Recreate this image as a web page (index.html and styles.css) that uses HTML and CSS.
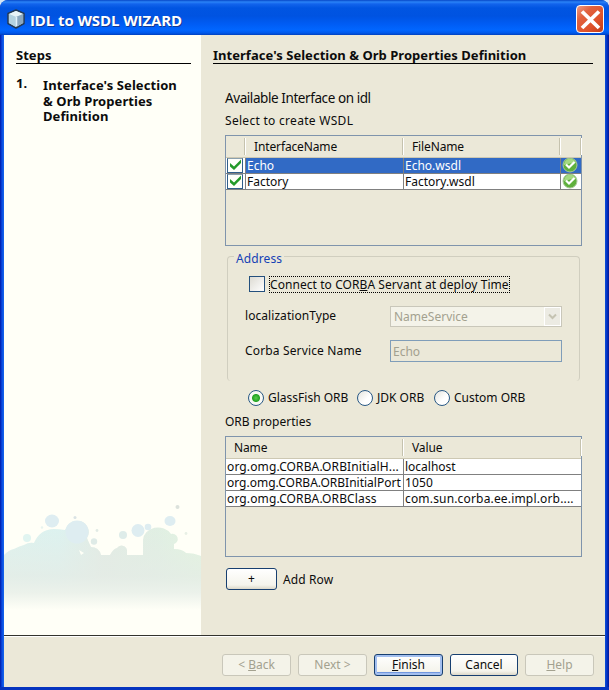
FILE: index.html
```html
<!DOCTYPE html>
<html lang="en">
<head>
<meta charset="utf-8">
<title>IDL to WSDL WIZARD</title>
<link rel="stylesheet" href="styles.css">
</head>
<body>
<div class="window">
  <header class="titlebar">
    <svg class="app-icon" width="20" height="20" viewBox="0 0 20 20">
      <path d="M10 1 18 4.500V14.500L10 19 2 14.500V4.500Z" fill="#c2ddec" stroke="#243a56" stroke-width="1.500" stroke-linejoin="round"/>
      <path d="M10 2 17 5 10 8 3 5Z" fill="#e9f4f8"/>
      <path d="M3 5 10 8V18L3 14Z" fill="#b4d2e0"/>
      <path d="M10 8 17 5V14L10 18Z" fill="#8ba8c0"/>
      <path d="M10.500 8V17" stroke="#e2f1fa" stroke-width="1.500"/>
    </svg>
    <h1 class="title">IDL to WSDL WIZARD</h1>
    <button class="close" aria-label="Close">
      <svg width="23" height="23" viewBox="0 0 23 23"><path d="M3 3.500 20 20M20 3.500 3 20" stroke="#fff" stroke-width="3.800"/></svg>
    </button>
  </header>
  <div class="body">
    <aside class="steps">
      <h2 class="heading">Steps</h2>
      <div class="step"><span class="num">1.</span><span class="step-text">Interface's Selection<br>&amp; Orb Properties<br>Definition</span></div>
      <svg class="art" width="197" height="130" viewBox="4 500 197 130">
        <defs>
          <linearGradient id="hue" x1="4" x2="201" y1="0" y2="0" gradientUnits="userSpaceOnUse">
            <stop offset="0" stop-color="#def3ef"/><stop offset=".28" stop-color="#dcf2f0"/><stop offset=".5" stop-color="#e2ebe4"/><stop offset=".78" stop-color="#e0efe3"/><stop offset="1" stop-color="#e2f5df"/>
          </linearGradient>
          <linearGradient id="fade" x1="0" x2="0" y1="525" y2="610" gradientUnits="userSpaceOnUse">
            <stop offset="0" stop-color="#e5ece5" stop-opacity="0"/><stop offset=".6" stop-color="#e5ece6" stop-opacity=".75"/><stop offset=".8" stop-color="#ecf2eb"/><stop offset="1" stop-color="#fffff7"/>
          </linearGradient>
          <clipPath id="cloud"><path d="M4 555Q9 550 14 549Q20 546 24 545Q29 542 34 543Q40 529 54 529Q59 529 65 530A12 12 0 0 1 77 521A11 11 0 0 1 87 538Q89 543 91 547Q99 547 101 555H110Q113 549 117 548A5.500 5.500 0 0 1 127 550V555H143V540A15 13 0 0 1 171 534A5 5 0 0 1 174 544V549Q182 549 186 553Q194 553 201 556V616H4Z"/></clipPath>
        </defs>
        <g clip-path="url(#cloud)"><path d="M4 515H201V616H4Z" fill="url(#hue)"/><path d="M4 515H201V616H4Z" fill="url(#fade)"/></g>
        <g fill="#deedf1">
          <ellipse cx="52" cy="521" rx="7" ry="6.500"/><circle cx="77" cy="532" r="11.500"/><circle cx="138" cy="530.500" r="6.500"/><circle cx="148" cy="527" r="3.300"/><ellipse cx="170" cy="521" rx="5.500" ry="5"/>
          <circle cx="123" cy="535" r="4" fill="#deece9"/><circle cx="94" cy="541.500" r="3.200" fill="#dfebe7"/><circle cx="27" cy="538" r="4" fill="#e1f5f1"/>
          <circle cx="177.500" cy="507" r="2" fill="#dce2dc"/><circle cx="75" cy="517.500" r="1.500" fill="#dae3e5"/><circle cx="97" cy="530.500" r="1.400" fill="#e2ebe5"/><circle cx="42" cy="527.500" r="1.200" fill="#e8f4ef"/><circle cx="186" cy="533.500" r="1.400" fill="#e8f0e6"/>
        </g>
        <path d="M79 550 84 553 81 555Z" fill="#fffff7"/>
      </svg>
    </aside>
    <main class="panel">
      <h2 class="heading">Interface's Selection &amp; Orb Properties Definition</h2>
      <div class="content">
        <p class="avail">Available Interface on idl</p>
        <p class="select">Select to create WSDL</p>
        <div class="table interfaces">
          <div class="row head"><span></span><span>InterfaceName</span><span>FileName</span><span></span></div>
          <div class="row selected">
            <span class="mark"><svg width="15" height="14" viewBox="0 0 15 14"><path d="M2 5 6 8.500 13 1.500V5L6 12 2 8.500Z" fill="#249a28"/></svg></span>
            <span>Echo</span><span>Echo.wsdl</span>
            <span class="ok"><svg width="16" height="16" viewBox="0 0 16 16"><circle cx="8" cy="8" r="7" fill="#5fb03c" stroke="#a9c79a"/><path d="M2 7Q3 2 8 1.500Q13 2 14 6Q8 6 2 8" fill="#a4d981"/><path d="M4 7.500 7 10.500 12.500 5" fill="none" stroke="#fff" stroke-width="2.200"/></svg></span>
          </div>
          <div class="row">
            <span class="mark"><svg width="15" height="14" viewBox="0 0 15 14"><path d="M2 5 6 8.500 13 1.500V5L6 12 2 8.500Z" fill="#249a28"/></svg></span>
            <span>Factory</span><span>Factory.wsdl</span>
            <span class="ok"><svg width="16" height="16" viewBox="0 0 16 16"><circle cx="8" cy="8" r="7" fill="#5fb03c" stroke="#a9c79a"/><path d="M2 7Q3 2 8 1.500Q13 2 14 6Q8 6 2 8" fill="#a4d981"/><path d="M4 7.500 7 10.500 12.500 5" fill="none" stroke="#fff" stroke-width="2.200"/></svg></span>
          </div>
        </div>
        <section class="group">
          <h3 class="legend">Address</h3>
          <div class="connect"><i class="check"></i><span class="focus">Connect to COR<u>B</u>A Servant at deploy Time</span></div>
          <div class="field type"><label>localizationType</label><div class="combo"><span>NameService</span><i class="drop"><svg width="9" height="7" viewBox="0 0 9 7"><path d="M1 1.500 4.500 5 8 1.500" fill="none" stroke="#c5c3b2" stroke-width="2"/></svg></i></div></div>
          <div class="field name"><label>Corba Service Name</label><div class="input">Echo</div></div>
        </section>
        <div class="radios">
          <i class="radio on"></i><span class="r1">GlassFish ORB</span>
          <i class="radio"></i><span class="r2">JDK ORB</span>
          <i class="radio"></i><span class="r3">Custom ORB</span>
        </div>
        <p class="orb">ORB properties</p>
        <div class="table props">
          <div class="row head"><span>Name</span><span>Value</span></div>
          <div class="row"><span class="wide">org.omg.CORBA.ORBInitialH...</span><span>localhost</span></div>
          <div class="row"><span>org.omg.CORBA.ORBInitialPort</span><span class="wide">1050</span></div>
          <div class="row"><span class="wide">org.omg.CORBA.ORBClass</span><span class="wider">com.sun.corba.ee.impl.orb....</span></div>
        </div>
        <div class="add"><button class="btn plus">+</button><span>Add Row</span></div>
      </div>
    </main>
  </div>
  <footer class="footer">
    <button class="btn off">&lt; <u>B</u>ack</button>
    <button class="btn off">Next &gt;</button>
    <button class="btn default"><u>F</u>inish</button>
    <button class="btn cancel">Cancel</button>
    <button class="btn off"><u>H</u>elp</button>
  </footer>
</div>
</body>
</html>
```
FILE: styles.css
```css
* { box-sizing: border-box; }
body { margin: 0; background: #d5e5f5; font: 12px/16px "Noto Sans", sans-serif; color: #0c0c0c; }
h1, h2, h3, p { margin: 0; font-size: inherit; font-weight: normal; }
button { font: inherit; color: inherit; padding: 0; }
i { font-style: normal; }
svg { display: block; }

.window { width: 609px; height: 690px; display: flex; flex-direction: column; padding: 0 4px; border-bottom: 3px solid #0634bf; border-radius: 8px 8px 0 0; background: linear-gradient(90deg, #0019a8, #0a4be0 2px, #1667ec 4px, #0b50d8 605px, #0431c4 607px, #001794); overflow: hidden; }
.titlebar { flex: none; height: 35px; margin: 0 -4px; padding: 5px 5px 0 6px; display: flex; align-items: flex-start; background: linear-gradient(#0747c7, #2a83f7 2px, #1263ec 4px, #0155e2 8px, #0053e1 16px, #005cf4 24px, #0166ff 30px, #0058ea 33px, #0140bd 35px); }
.app-icon { margin-top: 4px; }
.title { margin: 5px 0 0 4px; flex: 1; font: bold 15px/20px "Open Sans", sans-serif; letter-spacing: -.1px; color: #fff; text-shadow: 1px 1px #123a93; white-space: nowrap; }
.close { width: 28px; height: 28px; display: grid; place-items: center; border: 1px solid #fff; border-radius: 4px; background: linear-gradient(135deg, #ef9b83, #e0623f 30%, #e0532b 65%, #c33c17); }

.body { flex: none; height: 600px; display: flex; background: #ebe8d8; }
.steps { width: 197px; padding: 12px 10px 0 12px; background: #fffff7; display: flex; flex-direction: column; }
.heading { height: 17px; border-bottom: 1px solid #000; font-weight: bold; font-size: 13px; white-space: nowrap; line-height: 16px; letter-spacing: .03px; }
.step { display: flex; margin-top: 14px; font-weight: bold; font-size: 13px; line-height: 15.5px; white-space: nowrap; letter-spacing: .08px; }
.num { width: 27px; margin-top: -2px; }
.art { margin: auto -10px 5px -12px; }

.panel { width: 404px; padding: 12px 12px 0; }
.content { padding: 0 11px 0 12px; }
.avail { margin-top: 24px; font-size: 13.5px; line-height: 20px; letter-spacing: -.42px; white-space: nowrap; }
.select { margin-top: 5px; letter-spacing: .29px; white-space: nowrap; }

.table { width: 357px; margin-top: 6px; border: 1px solid #7f94ac; white-space: nowrap; }
.interfaces { height: 111px; }
.row { display: grid; background: #808080; column-gap: 1px; padding-bottom: 1px; }
.row > span { background: #fff; height: 15px; line-height: 15px; padding-left: 1px; overflow: hidden; }
.interfaces .row { grid-template-columns: 19px 157px 156px 20px; }
.interfaces .row > span { line-height: 16px; }
.row.head { height: 22px; padding: 0 0 2px; background: #ebe8d8; border-bottom: 1px solid #cdc8b3; }
.row.head > span, .interfaces .row.head > span { height: 17px; margin-top: 2px; line-height: 18px; padding-left: 8px; letter-spacing: -.13px; background: none; border-right: 1px solid #c5c2ae; box-shadow: 1px 0 #fff; }
.row.selected > span { background: #316ac5; color: #fff; }
.row > .mark { padding: 0; background: #fffffa !important; border: 1px solid #315e8b; border-top-color: #8ba0ae; margin: 0 2px 0 1px; box-shadow: 2px 0 #fff, -1px 0 #fff; }
.mark svg { margin-top: -1px; }
.ok svg { margin-top: -1px; }
.row .wide { letter-spacing: .12px; }
.row .wider { letter-spacing: .17px; }

.group { position: relative; width: 353px; height: 125px; margin: 10px 0 0 2px; border: 1px solid #d0cebf; border-bottom: 0; border-radius: 4px; padding: 18px 17px 0; }
.legend { position: absolute; left: 6px; top: -6px; padding: 0 2px; background: #ebe8d8; color: #1541b5; letter-spacing: .1px; }
.connect { display: flex; align-items: center; height: 18px; padding-left: 4px; white-space: nowrap; }
.check { width: 16px; height: 16px; border: 1px solid #24507d; background: linear-gradient(135deg, #dddbd3, #fff); }
.focus { margin-left: 4px; outline: 1px dotted #000; outline-offset: -1px; height: 17px; padding: 0 1px; line-height: 17px; letter-spacing: .07px; }
.field { display: flex; align-items: center; height: 22px; white-space: nowrap; }
.field label { width: 145px; letter-spacing: .06px; }
.type { margin-top: 12px; }
.name { margin-top: 13px; }
.name label { letter-spacing: .15px; }
.combo, .input { width: 172px; height: 21px; border: 1px solid #c9c7ba; background: #f4f3e9; color: #a3a18f; padding-left: 3px; line-height: 19px; display: flex; justify-content: space-between; }
.input { height: 22px; border-color: #7f9db9; background: #ebe8d8; padding-left: 2px; line-height: 21px; }
.drop { width: 17px; height: 19px; border: 1px solid #fff; background: #ecebe3; display: grid; place-items: center; }

.radios { display: flex; align-items: center; height: 18px; margin: 8px 0 0 23px; white-space: nowrap; }
.radio { width: 16px; height: 16px; border: 1px solid #285885; border-radius: 50%; background: linear-gradient(135deg, #e4e4dd, #fff 60%); flex: none; }
.radio.on { background: radial-gradient(circle, #57cc4c, #22a322 3.5px, #f8f9f4 4.5px); }
.radios span { margin-left: 4px; }
.r1 { width: 89px; }
.r2 { width: 57px; }
.orb { margin-top: 7px; }
.props { height: 121px; }
.props .row { grid-template-columns: 177px 177px; }
.props .head > span { padding-left: 8px; line-height: 18px; }
.add { display: flex; align-items: center; gap: 6px; margin: 11px 0 0 1px; letter-spacing: .1px; }
.add span { padding-top: 2px; }

.btn { height: 22px; border: 1px solid #173f70; border-radius: 3px; background: linear-gradient(#fff, #f5f4ec 80%, #dcd8c9); white-space: nowrap; }
.plus { width: 51px; }
.footer { flex: none; height: 52px; background: #ebe8d8; border-top: 1px solid #33332d; box-shadow: inset 0 1px #fff; display: flex; gap: 7px; padding: 18px 11px 0 218px; }
.footer .btn { width: 69px; flex: none; }
.footer .cancel { width: 68px; }
.btn.off { border-color: #c9c7ba; background: #f4f3e9; color: #a3a18f; }
.btn.default { box-shadow: inset 0 0 0 2px #a3bfef, inset 0 -1px 0 2px #7197df; }
```
